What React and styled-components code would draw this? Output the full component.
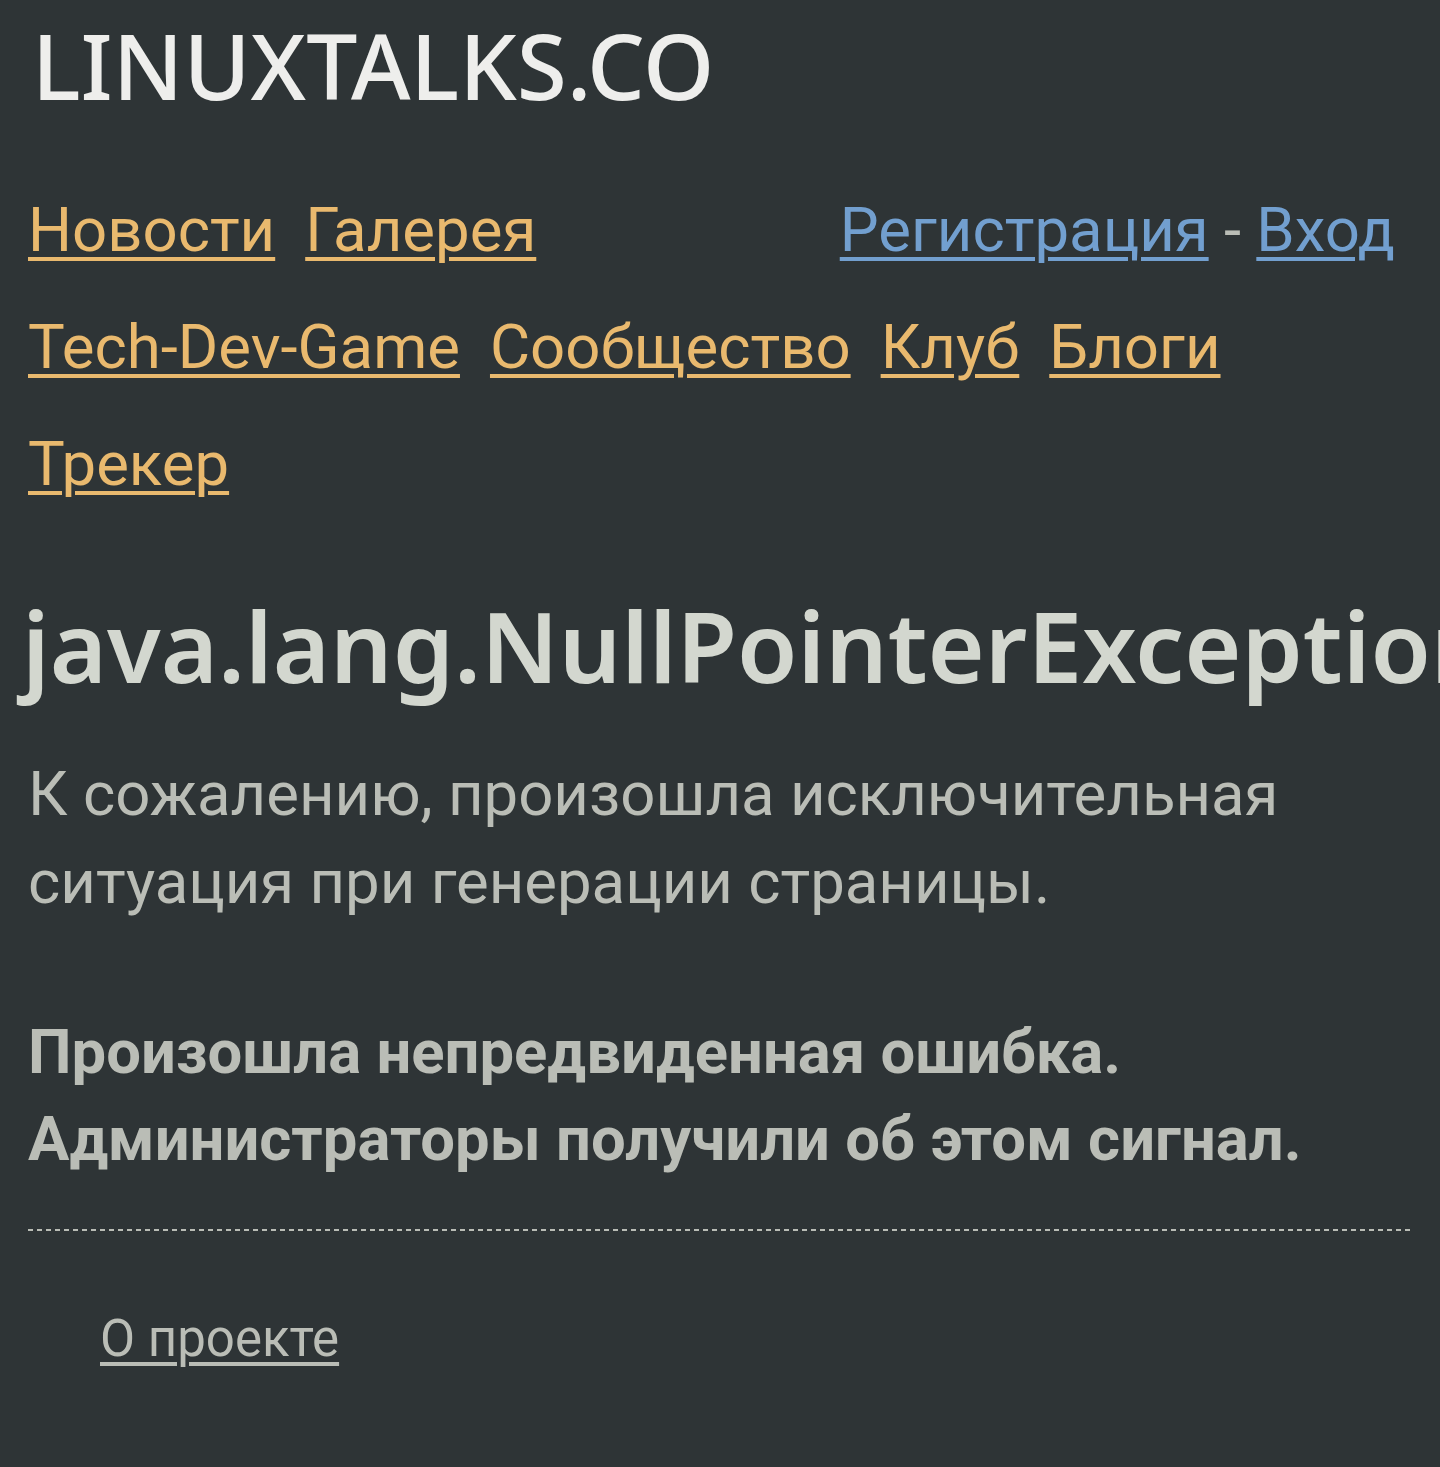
import styled, { createGlobalStyle } from "styled-components";

const GlobalStyle = createGlobalStyle`
  html, body {
    margin: 0;
    padding: 0;
    background: #2e3436;
  }
  body {
    font-family: Roboto, "Noto Sans", sans-serif;
    color: #babdb6;
  }
`;

const Page = styled.div`
  padding: 0 26px 40px 28px;
  min-height: 1467px;
  box-sizing: border-box;
  overflow-x: hidden;
`;

// HEADER
const SiteTitle = styled.h1`
  margin: 10px 0 0 4px;
  font-family: "Noto Sans", sans-serif;
  font-weight: 500;
  font-size: 91px;
  line-height: 110px;
  color: #eeeeec;
`;

const Nav = styled.nav`
  margin-top: 52px;
  font-family: Roboto, sans-serif;
  font-size: 61.7px;
  line-height: 117px;
`;

const Auth = styled.div`
  float: right;
  margin-right: 19px;
  color: #babdb6;
`;

const Link = styled.a`
  color: ${(props) => props.color || "#e9b96e"};
  text-decoration: underline;
  text-decoration-thickness: 4px;
  text-underline-offset: 6px;
  cursor: pointer;
`;

const MenuLink = styled(Link)`
  display: inline-block;
  margin-right: 30px;
  white-space: nowrap;
`;

// CONTENT
const Heading = styled.h2`
  margin: 62px 0 0 -6px;
  font-family: "Noto Sans", sans-serif;
  font-weight: 600;
  font-size: 98px;
  line-height: 120px;
  color: #d3d7cf;
  white-space: nowrap;
`;

const Message = styled.p`
  margin: 45px 0 0;
  font-size: 61.7px;
  line-height: 88px;
  color: #babdb6;
`;

const Notice = styled.p`
  margin: 83px 0 0;
  font-size: 61.6px;
  font-weight: 700;
  line-height: 87px;
  color: #babdb6;
`;

const Divider = styled.hr`
  margin: 46px 0 0;
  border: 0;
  height: 2px;
  background: repeating-linear-gradient(
    to right,
    #babdb6 0 5px,
    transparent 5px 9px
  );
`;

const Footer = styled.ul`
  margin: 73px 0 0;
  padding: 0 0 0 72px;
  list-style: none;
  font-size: 51px;
  line-height: 70px;
`;

const menu = [
  "Новости",
  "Галерея",
  "Tech-Dev-Game",
  "Сообщество",
  "Клуб",
  "Блоги",
  "Трекер",
];

const App = () => {
  return (
    <Page>
      <GlobalStyle />
      <SiteTitle>LINUXTALKS.CO</SiteTitle>

      <Nav>
        <Auth>
          <Link color="#729fcf">Регистрация</Link> - <Link color="#729fcf">Вход</Link>
        </Auth>
        {menu.map((item) => (
          <MenuLink key={item}>{item}</MenuLink>
        ))}
      </Nav>

      <Heading>java.lang.NullPointerException</Heading>
      <Message>
        К сожалению, произошла исключительная ситуация при генерации страницы.
      </Message>
      <Notice>
        Произошла непредвиденная ошибка. Администраторы получили об этом сигнал.
      </Notice>

      <Divider />

      <Footer>
        <li>
          <Link color="#babdb6">О проекте</Link>
        </li>
      </Footer>
    </Page>
  );
};

export default App;
